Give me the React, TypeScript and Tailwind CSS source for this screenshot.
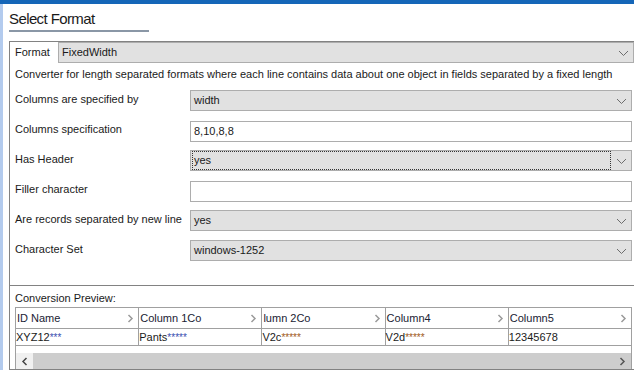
import React from 'react';

// 폼 행 데이터
const rows: { label: string; value: string; kind: 'select' | 'input'; focus?: boolean }[] = [
  { label: 'Columns are specified by', value: 'width', kind: 'select' },
  { label: 'Columns specification', value: '8,10,8,8', kind: 'input' },
  { label: 'Has Header', value: 'yes', kind: 'select', focus: true },
  { label: 'Filler character', value: '', kind: 'input' },
  { label: 'Are records separated by new line', value: 'yes', kind: 'select' },
  { label: 'Character Set', value: 'windows-1252', kind: 'select' },
];

const headers = ['ID Name', 'Column 1Co', 'lumn 2Co', 'Column4', 'Column5'];

const cells: { text: string; stars: string; color: string }[] = [
  { text: 'XYZ12', stars: '***', color: 'text-[#3a4fb0]' },
  { text: 'Pants', stars: '*****', color: 'text-[#3a4fb0]' },
  { text: 'V2c', stars: '*****', color: 'text-[#a05a20]' },
  { text: 'V2d', stars: '*****', color: 'text-[#a05a20]' },
  { text: '12345678', stars: '', color: '' },
];

function Chevron() {
  return (
    <svg width="11" height="7" viewBox="0 0 11 7" className="shrink-0">
      <path d="M1 1 L5.5 5.5 L10 1" fill="none" stroke="#6d6d6d" strokeWidth="1" />
    </svg>
  );
}

function Select({ value, focus, className }: { value: string; focus?: boolean; className: string }) {
  return (
    <div className={`flex h-[21px] items-center border border-[#adadad] bg-[#e1e1e1] pl-[2px] pr-[4px] ${className}`}>
      <div className={`flex h-[17px] flex-1 items-center ${focus ? 'outline outline-1 outline-dotted outline-[#333]' : ''}`}>
        <span className="pl-[1px]">{value}</span>
      </div>
      <div className="ml-[6px] flex w-[11px] justify-center pt-[2px]">
        <Chevron />
      </div>
    </div>
  );
}

function Arrow({ dir, color }: { dir: 'left' | 'right'; color: string }) {
  return (
    <svg width="7" height="9" viewBox="0 0 7 9">
      <path
        d={dir === 'right' ? 'M1.5 1 L5 4.5 L1.5 8' : 'M5.5 1 L2 4.5 L5.5 8'}
        fill="none"
        stroke={color}
        strokeWidth="1.5"
      />
    </svg>
  );
}

export default function App() {
  return (
    <div
      className="flex h-[370px] w-[634px] flex-col overflow-hidden bg-white text-[11px] text-[#1a1a1a]"
      style={{ fontFamily: '"Liberation Sans", Arial, sans-serif' }}
    >
      <div className="h-[4px] shrink-0 bg-[#1566b8]" />
      <div className="flex flex-1">
        <div className="w-[3px] bg-[#b3cbee]" />
        <div className="flex flex-1 flex-col pl-[6px]">
          {/* 제목 */}
          <div className="h-[37px] pt-[6px]">
            <div className="text-[15px] leading-[18px] tracking-[-0.6px] text-[#1a1a1a]">Select Format</div>
            <div className="mt-[2px] h-[2px] w-[140px] bg-[#8a97a6]" />
          </div>

          {/* 형식 패널 */}
          <div className="flex h-[244px] shrink-0 flex-col border-l border-t border-[#828282] pl-[5px]">
            <div className="flex h-[21px] items-center">
              <span className="w-[43px]">Format</span>
              <Select value="FixedWidth" className="flex-1" />
            </div>
            <div className="mt-[3px] whitespace-nowrap leading-[16px]">
              Converter for length separated formats where each line contains data about one object in fields separated by a fixed length
            </div>
            <div className="mt-[8px] flex flex-col">
              {rows.map((r) => (
                <div key={r.label} className="flex h-[30px] items-start">
                  <span className="w-[175px] whitespace-nowrap pt-[1px] leading-[16px]">{r.label}</span>
                  {r.kind === 'select' ? (
                    <Select value={r.value} focus={r.focus} className="mr-[2px] flex-1" />
                  ) : (
                    <div className="mr-[2px] mt-[1px] flex h-[21px] flex-1 items-center border border-[#adadad] bg-white pl-[3px]">
                      {r.value}
                    </div>
                  )}
                </div>
              ))}
            </div>
          </div>

          {/* 변환 미리보기 */}
          <div className="flex h-[85px] flex-col border-y border-l border-[#828282] pl-[5px]">
            <div className="pt-[4px] leading-[16px]">Conversion Preview:</div>
            <div className="mr-[2px] mt-[1px] border-x border-[#a0a0a0]">
              <div className="flex border-y border-[#a0a0a0]">
                {headers.map((h, i) => (
                  <div
                    key={h}
                    className={`flex h-[20px] flex-1 items-center justify-between pr-[4px] ${i > 0 ? 'border-l border-[#a0a0a0]' : ''}`}
                  >
                    <span className="pl-[1px] text-[#1a2233]">{h}</span>
                    <Arrow dir="right" color="#9a9a9a" />
                  </div>
                ))}
              </div>
              <div className="flex border-b border-[#a0a0a0]">
                {cells.map((c, i) => (
                  <div
                    key={i}
                    className={`flex h-[16px] flex-1 items-center ${i > 0 ? 'border-l border-[#a0a0a0]' : ''}`}
                  >
                    <span>{c.text}</span>
                    <span className={`text-[10px] ${c.color}`}>{c.stars}</span>
                  </div>
                ))}
              </div>
              <div className="h-[7px]" />
              <div className="flex h-[16px] items-center bg-[#cdcdcd]">
                <div className="flex h-full w-[17px] items-center justify-center bg-[#f0f0f0]">
                  <Arrow dir="left" color="#444" />
                </div>
                <div className="flex-1" />
                <div className="flex h-full w-[17px] items-center justify-center">
                  <Arrow dir="right" color="#555" />
                </div>
              </div>
            </div>
          </div>
        </div>
      </div>
    </div>
  );
}
